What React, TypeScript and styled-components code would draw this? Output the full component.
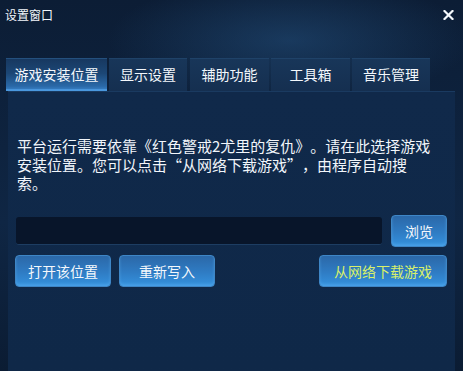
import React from "react";
import styled, { createGlobalStyle } from "styled-components";

const Global = createGlobalStyle`
  html, body { margin: 0; padding: 0; background: #0a1a30; }
  body { font-family: "Noto Sans CJK SC", "Noto Sans", sans-serif; }
`;

const Window = styled.div`
  width: 463px;
  height: 371px;
  overflow: hidden;
  display: flex;
  flex-direction: column;
  background:
    radial-gradient(ellipse 260px 90px at 290px 40px, rgba(40, 90, 140, 0.45), rgba(40, 90, 140, 0) 70%),
    linear-gradient(180deg, #0c1d35 0%, #0f2644 60%, #0b1c33 100%);
  color: #fff;
`;

const TitleBar = styled.div`
  height: 30px;
  display: flex;
  align-items: center;
  justify-content: space-between;
  padding: 0 9px 0 5px;
`;

const Title = styled.div`
  font-size: 12px;
  line-height: 14px;
  color: #f2f6fb;
  margin-top: -1px;
`;

const Close = styled.button`
  width: 12px;
  height: 12px;
  padding: 0;
  border: 0;
  background: transparent;
  display: flex;
  align-items: center;
  justify-content: center;
  cursor: pointer;
  margin-top: -1px;
`;

const TabRow = styled.div`
  display: flex;
  align-items: flex-end;
  gap: 2px;
  padding: 28px 0 0 6px;
  height: 33px;
`;

const Tab = styled.div<{ $active?: boolean; $w: number; $gap?: number }>`
  width: ${(p) => p.$w}px;
  height: 33px;
  margin-left: ${(p) => p.$gap ?? 0}px;
  box-sizing: border-box;
  display: flex;
  align-items: center;
  justify-content: center;
  font-size: 14px;
  color: #f4f8fc;
  padding-bottom: 3px;
  border-top: 1px solid ${(p) => (p.$active ? "#24507e" : "#1f4268")};
  background: ${(p) =>
    p.$active
      ? "linear-gradient(180deg, #173860 0%, #1c4776 45%, #2a69a8 85%, #3b86cc 100%)"
      : "linear-gradient(180deg, #183659 0%, #152f50 100%)"};
  box-shadow: ${(p) => (p.$active ? "inset 0 -2px 0 rgba(90, 170, 240, 0.55)" : "none")};
`;

const Panel = styled.div`
  flex: 1;
  margin: 0 8px;
  padding: 45px 8px 0 7px;
  background: linear-gradient(180deg, #10294a 0%, #0f2848 100%);
  border-top: 1px solid #1a3a60;
  display: flex;
  flex-direction: column;
`;

const Description = styled.p`
  margin: 0 0 0 2px;
  font-size: 15px;
  line-height: 18.5px;
  color: #f2f6fb;
  white-space: nowrap;
  text-spacing-trim: space-all;
`;

const Quote = styled.span`
  font-feature-settings: "fwid" 1;
`;

const InputRow = styled.div`
  display: flex;
  align-items: center;
  justify-content: space-between;
  margin-top: 22px;
  padding-left: 1px;
`;

const PathInput = styled.div`
  width: 366px;
  height: 28px;
  box-sizing: border-box;
  border-radius: 3px;
  background: #08152a;
  border-bottom: 1px solid #1d3d62;
`;

const ButtonRow = styled.div`
  display: flex;
  align-items: center;
  gap: 8px;
  margin-top: 8px;
`;

const Button = styled.button<{ $w: number; $accent?: boolean }>`
  width: ${(p) => p.$w}px;
  height: 32px;
  box-sizing: border-box;
  padding: 0;
  border-radius: 4px;
  border: 1px solid #3e86c6;
  background: linear-gradient(180deg, #2b68a8 0%, #2f7cc4 55%, #3592de 100%);
  box-shadow: inset 0 -2px 3px rgba(110, 190, 250, 0.35);
  font-family: "Noto Sans CJK SC", "Noto Sans", sans-serif;
  font-size: 14px;
  color: ${(p) => (p.$accent ? "#d8f06a" : "#f4f8fc")};
  cursor: pointer;
`;

const Spacer = styled.div`
  flex: 1;
`;

export default function App() {
  return (
    <>
      <Global />
      <Window lang="zh-CN">
        <TitleBar>
          <Title>设置窗口</Title>
          <Close aria-label="关闭">
            <svg width="11" height="10" viewBox="0 0 11 10">
              <path d="M1.5 1 L9.5 9 M9.5 1 L1.5 9" stroke="#f4f8fc" strokeWidth="2.2" strokeLinecap="square" />
            </svg>
          </Close>
        </TitleBar>
        <TabRow>
          <Tab $active $w={101}>游戏安装位置</Tab>
          <Tab $w={78}>显示设置</Tab>
          <Tab $w={79} $gap={1}>辅助功能</Tab>
          <Tab $w={79}>工具箱</Tab>
          <Tab $w={78}>音乐管理</Tab>
        </TabRow>
        <Panel>
          <Description>
            平台运行需要依靠《红色警戒2尤里的复仇》。请在此选择游戏
            <br />
            安装位置。您可以点击<Quote>“</Quote>从网络下载游戏<Quote>”</Quote>，由程序自动搜
            <br />
            索。
          </Description>
          <InputRow>
            <PathInput />
            <Button $w={56}>浏览</Button>
          </InputRow>
          <ButtonRow>
            <Button $w={96}>打开该位置</Button>
            <Button $w={96}>重新写入</Button>
            <Spacer />
            <Button $w={128} $accent>从网络下载游戏</Button>
          </ButtonRow>
        </Panel>
      </Window>
    </>
  );
}
